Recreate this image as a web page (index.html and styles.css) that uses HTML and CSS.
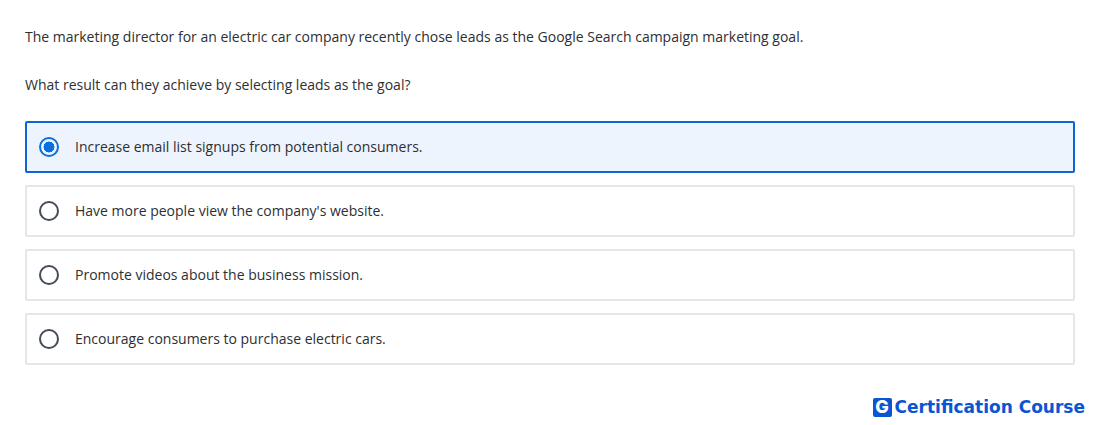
FILE: index.html
```html
<!DOCTYPE html>
<html lang="en">
<head>
<meta charset="utf-8">
<title>Question</title>
<link rel="stylesheet" href="styles.css">
</head>
<body>
<main class="quiz">
  <p class="question">The marketing director for an electric car company recently chose leads as the Google Search campaign marketing goal.</p>
  <p class="question prompt">What result can they achieve by selecting leads as the goal?</p>
  <div class="options">
    <div class="option selected"><span class="radio"></span><span>Increase email list signups from potential consumers.</span></div>
    <div class="option"><span class="radio"></span><span>Have more people view the company's website.</span></div>
    <div class="option"><span class="radio"></span><span>Promote videos about the business mission.</span></div>
    <div class="option"><span class="radio"></span><span>Encourage consumers to purchase electric cars.</span></div>
  </div>
</main>
<footer class="brand">
  <span class="brand-mark">G</span><span class="brand-name">Certification Course</span>
</footer>
</body>
</html>
```

FILE: styles.css
```css
* { box-sizing: border-box; }
html, body { margin: 0; padding: 0; }
body {
  width: 1100px;
  height: 425px;
  overflow: hidden;
  background: #fff;
  color: #2d2f33;
  font-family: "Open Sans", sans-serif;
  font-size: 14px;
  line-height: 20px;
}
.quiz { padding: 27px 25px 0; }
.question { margin: 0; }
.prompt { margin-top: 28px; }
.options {
  display: flex;
  flex-direction: column;
  gap: 12px;
  margin-top: 26px;
}
.option {
  display: flex;
  align-items: center;
  gap: 16px;
  height: 52px;
  padding: 0 12px;
  background: #fff;
  border: 2px solid #e6e6e6;
  border-radius: 2px;
}
.option.selected {
  background: #eef4fd;
  border-color: #0a66d8;
}
.radio {
  flex: none;
  width: 20px;
  height: 20px;
  border: 2.5px solid #454c59;
  border-radius: 50%;
}
.selected .radio {
  border-color: #0a6fe0;
  background: radial-gradient(circle, #0a6fe0 0 5.2px, transparent 5.7px);
}
.brand {
  display: flex;
  justify-content: flex-end;
  align-items: center;
  gap: 3px;
  margin-top: 32px;
  padding-right: 15px;
}
.brand-mark {
  display: flex;
  align-items: center;
  justify-content: center;
  width: 19px;
  height: 19px;
  background: #0a55d2;
  border-radius: 2px;
  color: #fff;
  font-family: "Inter", sans-serif;
  font-size: 18px;
  font-weight: 800;
}
.brand-name {
  color: #0a55d2;
  font-family: "DejaVu Sans", sans-serif;
  font-size: 17px;
  font-weight: 700;
}
```
